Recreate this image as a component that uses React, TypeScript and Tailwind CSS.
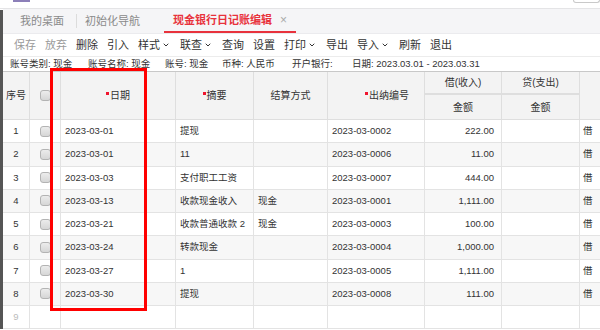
import { ChevronDown } from "lucide-react"

const TABS = [
  { label: "我的桌面" },
  { label: "初始化导航" },
]

const TOOLS = [
  { label: "保存", off: true },
  { label: "放弃", off: true },
  { label: "删除" },
  { label: "引入" },
  { label: "样式", menu: true },
  { label: "联查", menu: true },
  { label: "查询" },
  { label: "设置" },
  { label: "打印", menu: true },
  { label: "导出" },
  { label: "导入", menu: true },
  { label: "刷新" },
  { label: "退出" },
]

const INFO = [
  { text: "账号类别: 现金", w: "w-[78px]" },
  { text: "账号名称: 现金", w: "w-[77px]" },
  { text: "账号: 现金", w: "w-[57px]" },
  { text: "币种: 人民币", w: "w-[70px]" },
  { text: "开户银行:", w: "w-[60px]" },
  { text: "日期: 2023.03.01 - 2023.03.31", w: "w-[160px]" },
]

const ROWS = [
  { date: "2023-03-01", memo: "提现", way: "", no: "2023-03-0002", debit: "222.00" },
  { date: "2023-03-01", memo: "11", way: "", no: "2023-03-0006", debit: "11.00" },
  { date: "2023-03-03", memo: "支付职工工资", way: "", no: "2023-03-0007", debit: "444.00" },
  { date: "2023-03-13", memo: "收款现金收入", way: "现金", no: "2023-03-0001", debit: "1,111.00" },
  { date: "2023-03-21", memo: "收款普通收款 2", way: "现金", no: "2023-03-0003", debit: "100.00" },
  { date: "2023-03-24", memo: "转款现金", way: "", no: "2023-03-0004", debit: "1,000.00" },
  { date: "2023-03-27", memo: "1", way: "", no: "2023-03-0005", debit: "1,111.00" },
  { date: "2023-03-30", memo: "提现", way: "", no: "2023-03-0008", debit: "111.00" },
]

const COLS = "grid-cols-[27px_31px_115px_78px_74px_97px_77px_78px_40px]"

function Checkbox() {
  return <span className="block w-[11px] h-[11px] rounded-[3px] border border-[#b3b3b3] bg-gradient-to-b from-[#ececec] to-[#d6d6d6]" />
}

function Req() {
  return <span className="inline-block w-[3px] h-[3px] bg-[#f0142d] mr-[1px] mb-[5px]" />
}

export default function App() {
  return (
    <div className="w-[600px] h-[330px] overflow-hidden bg-white text-[#333] font-['Liberation_Sans','Noto_Sans_CJK_SC',sans-serif]">
      {/* top strip */}
      <div className="h-[9px] flex justify-between items-start border-b border-[#e4e4e6]">
        <div className="ml-[13px] w-[17px] h-[2px] bg-[#8c7fb8]" />
        <div className="w-[27px] h-[3px] rounded-b-[3px] border border-t-0 border-[#c9c9c9]" />
      </div>

      <div className="flex">
        <div className="w-[3px] bg-[#555] mt-[1px]" />
        <div className="flex-1 min-w-0">
          {/* tabs */}
          <div className="h-[25px] bg-[#f5f5f7] border-b border-[#ebebee] flex items-stretch text-[11px]">
            <div className="pl-[17px] flex items-center text-[#8a8a8a]">{TABS[0].label}</div>
            <div className="ml-[12px] my-auto w-px h-[14px] bg-[#dcdcdc]" />
            <div className="ml-[8px] flex items-center text-[#8a8a8a]">{TABS[1].label}</div>
            <div className="ml-[24px] px-[9px] flex items-center gap-[8px] border-b-2 border-[#e8323c]">
              <span className="text-[#e8323c] font-bold">现金银行日记账编辑</span>
              <span className="text-[#aaa] text-[12px] leading-none">×</span>
            </div>
          </div>

          {/* toolbar */}
          <div className="h-[23px] pl-[11px] flex items-center gap-[9px] text-[11px] border-b border-[#ececec]">
            {TOOLS.map((t) => (
              <div key={t.label} className={`flex items-center ${t.off ? "text-[#9a9a9a]" : "text-[#333]"}`}>
                <span>{t.label}</span>
                {t.menu && (
                  <span className="w-[11px] flex justify-center">
                    <ChevronDown size={8} strokeWidth={3} />
                  </span>
                )}
              </div>
            ))}
          </div>

          {/* account info */}
          <div className="h-[14px] pl-[7px] flex items-center text-[9.5px] leading-none overflow-hidden">
            {INFO.map((i) => (
              <span key={i.text} className={`${i.w} shrink-0 whitespace-nowrap`}>{i.text}</span>
            ))}
          </div>

          {/* table */}
          <div className="relative border-t border-[#c8c8c8]">
            <div className={`grid ${COLS} grid-rows-[23px_24px] bg-[#f3f3f3] text-[10px] text-[#333] border-b border-[#dedede]`}>
              <div className="row-span-2 flex items-center justify-center border-r border-[#dedede]">序号</div>
              <div className="row-span-2 flex items-center justify-center border-r border-[#dedede]"><Checkbox /></div>
              <div className="row-span-2 flex items-center justify-center border-r border-[#dedede]"><Req />日期</div>
              <div className="row-span-2 flex items-center justify-center border-r border-[#dedede]"><Req />摘要</div>
              <div className="row-span-2 flex items-center justify-center border-r border-[#dedede]">结算方式</div>
              <div className="row-span-2 flex items-center justify-center pl-[22px] border-r border-[#dedede]"><Req />出纳编号</div>
              <div className="col-start-7 row-start-1 flex items-center justify-center border-r border-b-2 border-[#dedede]">借(收入)</div>
              <div className="col-start-8 row-start-1 flex items-center justify-center border-r border-b-2 border-[#dedede]">贷(支出)</div>
              <div className="col-start-9 row-start-1 row-span-2" />
              <div className="col-start-7 row-start-2 flex items-center justify-center border-r border-[#dedede]">金额</div>
              <div className="col-start-8 row-start-2 flex items-center justify-center border-r border-[#dedede]">金额</div>
            </div>

            {ROWS.map((r, i) => (
              <div
                key={i}
                className={`grid ${COLS} h-[23.25px] text-[9.5px] border-b border-[#e3e3e3] ${i % 2 ? "bg-[#f7f7f7]" : "bg-white"}`}
              >
                <div className="flex items-center justify-center border-r border-[#e3e3e3]">{i + 1}</div>
                <div className="flex items-center justify-center border-r border-[#e3e3e3]"><Checkbox /></div>
                <div className="flex items-center pl-[4px] border-r border-[#e3e3e3]">{r.date}</div>
                <div className="flex items-center pl-[4px] border-r border-[#e3e3e3] whitespace-nowrap">{r.memo}</div>
                <div className="flex items-center pl-[4px] border-r border-[#e3e3e3]">{r.way}</div>
                <div className="flex items-center pl-[4px] border-r border-[#e3e3e3]">{r.no}</div>
                <div className="flex items-center justify-end pr-[7px] border-r border-[#e3e3e3]">{r.debit}</div>
                <div className="border-r border-[#e3e3e3]" />
                <div className="flex items-center pl-[3px]">借</div>
              </div>
            ))}

            <div className={`grid ${COLS} h-[23.25px] text-[9.5px] border-b border-[#e3e3e3] bg-white`}>
              <div className="flex items-center justify-center border-r border-[#e3e3e3] text-[#bbb]">9</div>
              <div className="border-r border-[#e3e3e3]" />
              <div className="border-r border-[#e3e3e3]" />
              <div className="border-r border-[#e3e3e3]" />
              <div className="border-r border-[#e3e3e3]" />
              <div className="border-r border-[#e3e3e3]" />
              <div className="border-r border-[#e3e3e3]" />
              <div className="border-r border-[#e3e3e3]" />
              <div />
            </div>

            {/* red highlight box */}
            <div className="absolute left-[47px] top-[-4px] w-[97px] h-[243px] border-[3px] border-[#f00] pointer-events-none" />
          </div>
        </div>
      </div>
    </div>
  )
}
